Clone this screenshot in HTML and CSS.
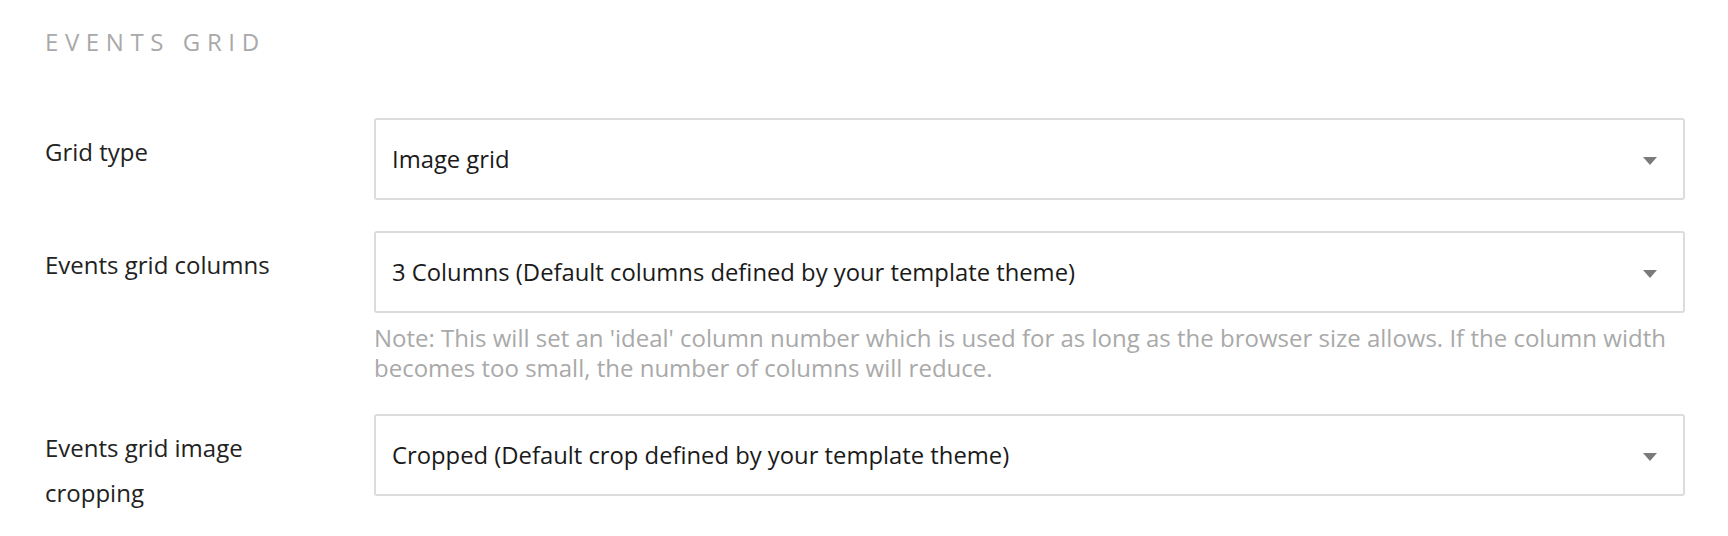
FILE: index.html
```html
<!DOCTYPE html>
<html>
<head>
<meta charset="utf-8">
<link rel="stylesheet" href="styles.css">
</head>
<body>
<div class="panel">
  <h2 class="section-title">Events Grid</h2>
  <div class="rows">
    <div class="row">
      <div class="label">Grid type</div>
      <div class="field">
        <div class="select"><span class="value">Image grid</span><span class="caret"></span></div>
      </div>
    </div>
    <div class="row">
      <div class="label">Events grid columns</div>
      <div class="field">
        <div class="select"><span class="value">3 Columns (Default columns defined by your template theme)</span><span class="caret"></span></div>
        <p class="note">Note: This will set an 'ideal' column number which is used for as long as the browser size allows. If the column width becomes too small, the number of columns will reduce.</p>
      </div>
    </div>
    <div class="row">
      <div class="label">Events grid image cropping</div>
      <div class="field">
        <div class="select"><span class="value">Cropped (Default crop defined by your template theme)</span><span class="caret"></span></div>
      </div>
    </div>
  </div>
</div>
</body>
</html>
```
FILE: styles.css
```css
html, body {
  margin: 0;
  padding: 0;
  background: #ffffff;
}
body {
  font-family: "Open Sans", "Noto Sans", sans-serif;
  color: #222222;
}
.panel {
  padding: 26px 43px 0 45px;
}
.section-title {
  margin: 0;
  font-size: 24px;
  font-weight: 400;
  letter-spacing: 6.6px;
  text-transform: uppercase;
  color: #a9a9a9;
  line-height: 32px;
}
.rows {
  margin-top: 60px;
  display: flex;
  flex-direction: column;
  gap: 31px;
}
.row {
  display: grid;
  grid-template-columns: 329px 1fr;
}
.label {
  font-size: 24px;
  line-height: 45px;
  padding-top: 11px;
  padding-right: 60px;
  color: #222222;
}
.select {
  height: 82px;
  box-sizing: border-box;
  border: 2px solid #dcdcdc;
  border-radius: 3px;
  display: flex;
  align-items: center;
  justify-content: space-between;
  padding: 0 26px 0 16px;
  font-size: 23.8px;
  color: #1a1a1a;
}
.caret {
  width: 0;
  height: 0;
  border-left: 7.5px solid transparent;
  border-right: 7.5px solid transparent;
  border-top: 8px solid #7a7a7a;
  margin-top: 4px;
}
.note {
  margin: 10px 0 0;
  font-size: 24px;
  line-height: 30px;
  color: #a9a9a9;
}
```
